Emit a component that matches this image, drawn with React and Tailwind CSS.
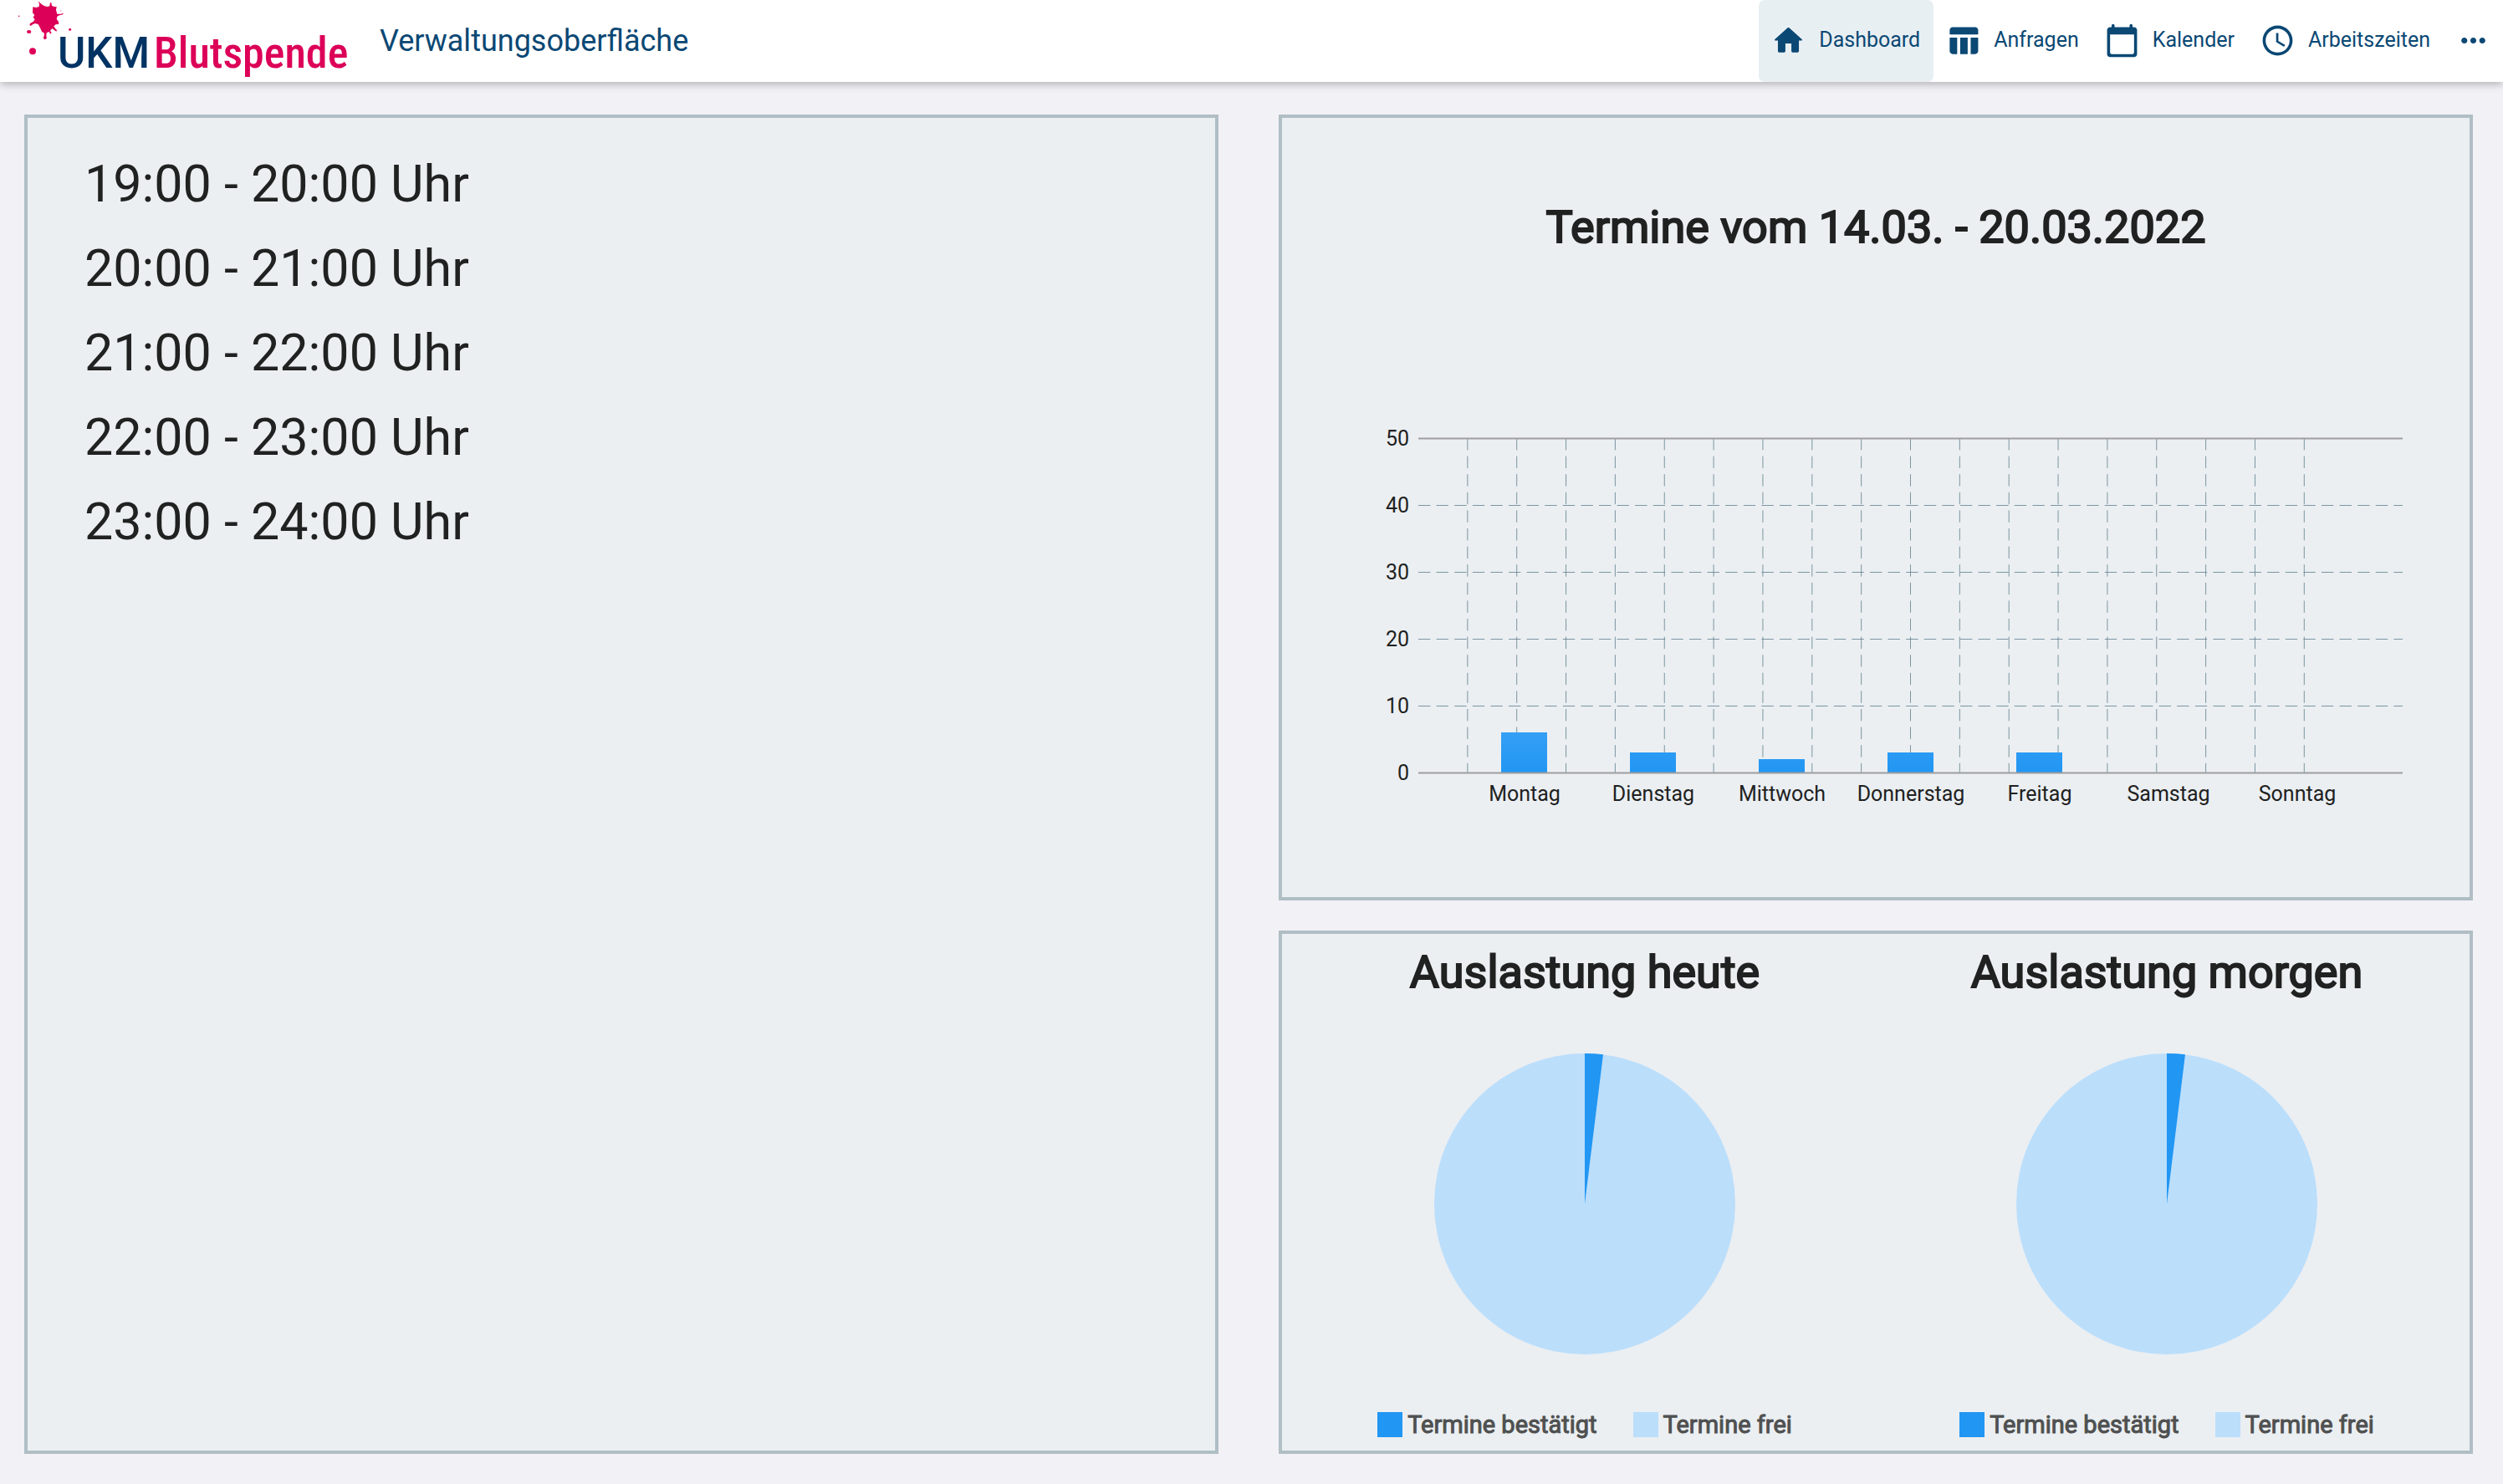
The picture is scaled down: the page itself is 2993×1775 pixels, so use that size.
import React from "react";
import { MdTableChart, MdAccessTime, MdMoreHoriz } from "react-icons/md";

const SLOTS = [
  "19:00 - 20:00 Uhr",
  "20:00 - 21:00 Uhr",
  "21:00 - 22:00 Uhr",
  "22:00 - 23:00 Uhr",
  "23:00 - 24:00 Uhr",
];

const DAYS = [
  { name: "Montag", count: 6 },
  { name: "Dienstag", count: 3 },
  { name: "Mittwoch", count: 2 },
  { name: "Donnerstag", count: 3 },
  { name: "Freitag", count: 3 },
  { name: "Samstag", count: 0 },
  { name: "Sonntag", count: 0 },
];

const PANEL = "border-4 border-[#b0bec5] bg-[#ebeff2]";
const HEADING =
  "text-center text-[54px] leading-[64px] font-normal [-webkit-text-stroke:2px_#202121]";

function HomeIcon({ className }) {
  return (
    <svg viewBox="0 0 24 24" fill="currentColor" className={className} aria-hidden="true">
      <path d="M10 19v-5h4v5c0 .55.45 1 1 1h3c.55 0 1-.45 1-1v-7h1.7c.46 0 .68-.57.33-.87L12.67 3.6c-.38-.34-.96-.34-1.34 0l-8.36 7.53c-.34.3-.13.87.33.87H5v7c0 .55.45 1 1 1h3c.55 0 1-.45 1-1z" />
    </svg>
  );
}

function CalendarIcon({ className }) {
  return (
    <svg viewBox="0 0 24 24" fill="currentColor" className={className} aria-hidden="true">
      <path d="M20 3h-1V2c0-.55-.45-1-1-1s-1 .45-1 1v1H7V2c0-.55-.45-1-1-1s-1 .45-1 1v1H4c-1.1 0-2 .9-2 2v16c0 1.1.9 2 2 2h16c1.1 0 2-.9 2-2V5c0-1.1-.9-2-2-2zm-1 18H5c-.55 0-1-.45-1-1V8h16v12c0 .55-.45 1-1 1z" />
    </svg>
  );
}

function Logo() {
  return (
    <svg viewBox="0 0 420 98" className="h-[98px] w-[420px] shrink-0" role="img" aria-label="UKM Blutspende">
      <g fill="#dc0058" transform="scale(0.33333)">
        <path d="M137 4 L148 14 L158 21 L170 24 L178 22 L180 9 L184 10 L186 20 L194 24 L203 24 L201 36 L205 50 L218 50 L227 47 L226 52 L216 54 L206 58 L203 68 L210 78 L211 86 L200 88 L193 94 L198 102 L204 108 L202 113 L194 107 L187 102 L180 110 L185 118 L181 122 L176 114 L167 118 L166 130 L168 137 L161 142 L155 137 L158 129 L159 119 L150 113 L144 100 L137 87 L126 84 L117 88 L110 93 L106 90 L108 84 L119 78 L125 70 L119 62 L124 54 L117 46 L118 25 L130 27 L140 24 L141 14 Z" />
        <ellipse cx="104" cy="114" rx="8" ry="6" />
        <circle cx="117" cy="184" r="12" />
        <circle cx="251" cy="106" r="4.5" />
        <circle cx="68" cy="58" r="2.5" />
        <circle cx="218" cy="39" r="2" opacity="0.5" />
      </g>
      <text x="69" y="81" fontSize="51" fontWeight="500" fill="#003363">UKM</text>
      <text
        x="184"
        y="81"
        fontSize="52"
        fontWeight="500"
        fill="#dc0058"
        fontFamily="'Roboto Condensed', 'Liberation Sans Narrow', Roboto, sans-serif"
      >
        Blutspende
      </text>
    </svg>
  );
}

function NavItem({ icon: Icon, label, active }) {
  return (
    <a
      href="#"
      aria-current={active ? "page" : undefined}
      className={
        active
          ? "flex items-center gap-[15px] rounded-[7px] bg-[#e8eff3] pr-4 pb-[2px] pl-[14px]"
          : "flex items-center gap-[15px] pr-4 pb-[2px] pl-[14px]"
      }
    >
      <Icon className="size-[43px]" />
      <span className="text-[25px] leading-8">{label}</span>
    </a>
  );
}

function BarChart() {
  const left = 163;
  const right = 1340;
  const top = 24;
  const bottom = 424;
  const stepX = (right - left) / 20;
  const y = (v) => bottom - v * 8;
  return (
    <svg viewBox="0 0 1420 480" className="mt-[196px] w-full" role="img" aria-label="Termine pro Tag">
      <defs>
        <linearGradient id="bar" gradientUnits="userSpaceOnUse" x1="0" y1={bottom} x2="0" y2={y(6)}>
          <stop offset="0" stopColor="#2196f3" />
          <stop offset="1" stopColor="#369ff5" />
        </linearGradient>
      </defs>
      <g stroke="#607d8b" strokeWidth="0.8" strokeDasharray="14.4 7.2">
        {Array.from({ length: 18 }, (_, i) => (
          <line key={i} x1={left + stepX * (i + 1)} x2={left + stepX * (i + 1)} y1={top} y2={bottom} />
        ))}
        {[10, 20, 30, 40].map((v) => (
          <line key={v} x1={left} x2={right} y1={y(v) + 0.5} y2={y(v) + 0.5} />
        ))}
      </g>
      {DAYS.map((d, i) => (
        <rect key={d.name} x={262 + i * 154} y={y(d.count)} width="55" height={d.count * 8} fill="url(#bar)" />
      ))}
      <g stroke="#9e9e9e" strokeWidth="1.8">
        <line x1={left} x2={right} y1={top + 0.5} y2={top + 0.5} />
        <line x1={left} x2={right} y1={bottom + 0.5} y2={bottom + 0.5} />
      </g>
      <g fontSize="25" fill="#202121">
        {[0, 10, 20, 30, 40, 50].map((v) => (
          <text key={v} x="152" y={y(v) + 9} textAnchor="end">
            {v}
          </text>
        ))}
        {DAYS.map((d, i) => (
          <text key={d.name} x={290 + i * 154} y="458" textAnchor="middle">
            {d.name}
          </text>
        ))}
      </g>
    </svg>
  );
}

function Pie({ share, label }) {
  const a = share * 2 * Math.PI;
  const x = 180 + 180 * Math.sin(a);
  const y = 180 - 180 * Math.cos(a);
  return (
    <svg viewBox="0 0 360 360" className="mt-[65px] size-[360px]" role="img" aria-label={label}>
      <circle cx="180" cy="180" r="180" fill="#bbdefb" />
      <path d={`M180 180V0A180 180 0 0 1 ${x} ${y}Z`} fill="#2196f3" />
    </svg>
  );
}

function Utilisation({ title }) {
  return (
    <section className="flex flex-col items-center">
      <h2 className={HEADING}>{title}</h2>
      <Pie share={3 / 154} label={title} />
      <ul className="mt-[66px] flex gap-[43px] text-[29px] leading-9 text-[#4f5050] [-webkit-text-stroke:1px_#4f5050]">
        <li className="flex items-center gap-[6px]">
          <span className="size-[30px] bg-[#2196f3]" />
          Termine bestätigt
        </li>
        <li className="flex items-center gap-[6px]">
          <span className="size-[30px] bg-[#bbdefb]" />
          Termine frei
        </li>
      </ul>
    </section>
  );
}

export default function App() {
  return (
    <div className="flex min-h-screen flex-col bg-[#f2f1f6] font-[Roboto,sans-serif] text-[#202121]">
      <header className="flex h-[98px] items-stretch justify-between bg-white text-[#0b4874] shadow-[0_3px_9px_rgba(0,0,0,0.26)]">
        <div className="flex items-center gap-[34px]">
          <Logo />
          <h1 className="text-[36px] leading-[44px] font-normal">Verwaltungsoberfläche</h1>
        </div>
        <nav className="flex" aria-label="Hauptnavigation">
          <NavItem icon={HomeIcon} label="Dashboard" active />
          <NavItem icon={MdTableChart} label="Anfragen" />
          <NavItem icon={CalendarIcon} label="Kalender" />
          <NavItem icon={MdAccessTime} label="Arbeitszeiten" />
          <button type="button" aria-label="Mehr" className="px-[14px] pb-[2px]">
            <MdMoreHoriz className="size-[43px]" />
          </button>
        </nav>
      </header>

      <main className="grid flex-1 grid-cols-2 gap-[72px] pt-[39px] pr-9 pb-9 pl-[29px]">
        <section className={`${PANEL} pt-[29px] pl-[68px]`} aria-label="Zeiten">
          <ul className="text-[61px] leading-[101px]">
            {SLOTS.map((s) => (
              <li key={s}>{s}</li>
            ))}
          </ul>
        </section>

        <div className="grid grid-rows-[3fr_2fr] gap-9">
          <section className={`${PANEL} pt-[99px]`}>
            <h2 className={HEADING}>Termine vom 14.03. - 20.03.2022</h2>
            <BarChart />
          </section>
          <div className={`${PANEL} grid grid-cols-2 px-[14px] pt-[14px]`}>
            <Utilisation title="Auslastung heute" />
            <Utilisation title="Auslastung morgen" />
          </div>
        </div>
      </main>
    </div>
  );
}
